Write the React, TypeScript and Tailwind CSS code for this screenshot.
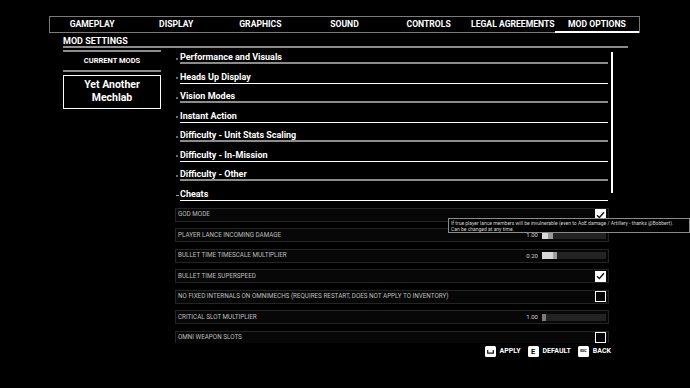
import React from "react";

const tabs = ["GAMEPLAY", "DISPLAY", "GRAPHICS", "SOUND", "CONTROLS", "LEGAL AGREEMENTS", "MOD OPTIONS"];

const sections: { t: string; gray: boolean; open?: boolean }[] = [
  { t: "Performance and Visuals", gray: true },
  { t: "Heads Up Display", gray: false },
  { t: "Vision Modes", gray: true },
  { t: "Instant Action", gray: false },
  { t: "Difficulty - Unit Stats Scaling", gray: true },
  { t: "Difficulty - In-Mission", gray: false },
  { t: "Difficulty - Other", gray: true },
  { t: "Cheats", gray: false, open: true },
];

type Row =
  | { label: string; kind: "check"; checked: boolean }
  | { label: string; kind: "slider"; value: string; fill: number; handle: number; handleColor: string };

const rows: Row[] = [
  { label: "GOD MODE", kind: "check", checked: true },
  { label: "PLAYER LANCE INCOMING DAMAGE", kind: "slider", value: "1.00", fill: 6, handle: 5, handleColor: "#9a9a9a" },
  { label: "BULLET TIME TIMESCALE MULTIPLIER", kind: "slider", value: "0.20", fill: 11, handle: 4, handleColor: "#a0a0a0" },
  { label: "BULLET TIME SUPERSPEED", kind: "check", checked: true },
  { label: "NO FIXED INTERNALS ON OMNIMECHS (REQUIRES RESTART, DOES NOT APPLY TO INVENTORY)", kind: "check", checked: false },
  { label: "CRITICAL SLOT MULTIPLIER", kind: "slider", value: "1.00", fill: 0, handle: 4, handleColor: "#7a7a7a" },
  { label: "OMNI WEAPON SLOTS", kind: "check", checked: false },
];

function Checkbox({ checked }: { checked: boolean }) {
  return (
    <div
      className={
        "w-[11px] h-[11px] border-[1.5px] border-white flex items-center justify-center " +
        (checked ? "bg-white" : "bg-black")
      }
    >
      {checked && (
        <svg width="9" height="8" viewBox="0 0 9 8">
          <path d="M1 4.2 L3.4 6.5 L8 1.2" fill="none" stroke="#111" strokeWidth="1.4" />
        </svg>
      )}
    </div>
  );
}

function Slider({ value, fill, handle, handleColor }: { value: string; fill: number; handle: number; handleColor: string }) {
  return (
    <div className="flex items-center">
      <span className="text-[6px] text-[#cfcfcf] mr-[4px] leading-none">{value}</span>
      <div className="w-[64px] h-[7px] bg-[#232323] flex">
        <div className="h-full bg-[#d8d8d8]" style={{ width: fill }} />
        <div className="h-full" style={{ width: handle, backgroundColor: handleColor }} />
      </div>
    </div>
  );
}

function KeyIcon({ children }: { children: React.ReactNode }) {
  return (
    <div className="w-[11px] h-[11px] bg-white rounded-[1.5px] flex items-center justify-center text-black">
      {children}
    </div>
  );
}

export default function App() {
  return (
    <div className="w-[690px] h-[388px] bg-black relative overflow-hidden font-['Roboto',sans-serif] text-white">
      <div className="pt-[16px]">
        {/* Tabs */}
        <div className="ml-[49px] w-[591px] h-[17px] border-t border-l border-r border-[#7a7a7a] flex">
          {tabs.map((t) => {
            const active = t === "MOD OPTIONS";
            return (
              <div
                key={t}
                className={
                  "flex-1 flex items-center justify-center text-[8.6px] font-bold leading-none " +
                  (active ? "border-b-[2px] border-white" : "border-b border-[#7a7a7a]")
                }
              >
                <span className={active ? "mt-[1px]" : ""}>{t}</span>
              </div>
            );
          })}
        </div>

        {/* Title */}
        <div className="ml-[63px] h-[13px] pt-[3px] text-[9px] font-bold leading-[10px]">MOD SETTINGS</div>
        <div className="ml-[63px] w-[565px] h-[2px] bg-[#8c8c8c]" />

        <div className="flex ml-[63px]">
          {/* Left column */}
          <div className="w-[98px] flex flex-col">
            <div className="mt-[2px] h-[2px] bg-[#8c8c8c]" />
            <div className="h-[18px] flex items-center justify-center text-[7.5px] font-bold leading-none">
              CURRENT MODS
            </div>
            <div className="h-[2px] bg-[#8c8c8c]" />
            <div className="mt-[3px] h-[34px] border-[1.5px] border-white flex items-center justify-center text-center text-[10.5px] font-bold leading-[12.7px]">
              Yet Another
              <br />
              Mechlab
            </div>
          </div>

          {/* Right column */}
          <div className="ml-[14px] flex">
            <div className="w-[434px] h-[295px] overflow-hidden flex flex-col">
              {sections.map((s, i) => (
                <div key={s.t} className={"flex " + (i === 0 ? "pt-[4px]" : "pt-[7.5px]")}>
                  <div className="w-[5px] flex items-center">
                    {s.open ? (
                      <div className="mt-[2px] ml-[1px] w-[3px] h-[1px] bg-[#9a9a9a]" />
                    ) : (
                      <div className="mt-[1px] ml-[1px] w-[2px] h-[2px] bg-[#6a6a6a]" />
                    )}
                  </div>
                  <div className="w-[428px] flex flex-col">
                    <div className="h-[10px] text-[9px] font-bold leading-[10px] whitespace-nowrap">{s.t}</div>
                    <div className="h-[2px] flex flex-col justify-end">
                      <div className={s.gray ? "h-[2px] bg-[#8c8c8c]" : "h-[1px] bg-white"} />
                    </div>
                  </div>
                </div>
              ))}

              <div className="mt-[7px] flex flex-col gap-[6.5px]">
                {rows.map((r) => (
                  <div
                    key={r.label}
                    className="shrink-0 h-[14px] border border-[#242424] bg-[#070707] flex items-center justify-between pl-[2px] pr-[2px]"
                  >
                    <span className="text-[6.3px] text-[#bdbdbd] leading-none whitespace-nowrap">{r.label}</span>
                    {r.kind === "check" ? (
                      <Checkbox checked={r.checked} />
                    ) : (
                      <Slider value={r.value} fill={r.fill} handle={r.handle} handleColor={r.handleColor} />
                    )}
                  </div>
                ))}
              </div>
            </div>
            {/* scrollbar */}
            <div className="ml-[2px] w-[2px]">
              <div className="mt-[4px] h-[141px] bg-white" />
            </div>
          </div>
        </div>

        {/* Bottom buttons */}
        <div className="mt-[3px] flex justify-end pr-[79px] gap-[7px] items-center">
          <div className="flex items-center gap-[4px]">
            <KeyIcon>
              <svg width="7" height="4" viewBox="0 0 7 4">
                <path d="M0.7 0 V3.2 H6.3 V0" fill="none" stroke="#111" strokeWidth="1.2" />
              </svg>
            </KeyIcon>
            <span className="text-[7px] font-bold leading-none">APPLY</span>
          </div>
          <div className="flex items-center gap-[4px]">
            <KeyIcon>
              <span className="text-[7.5px] font-bold leading-none">E</span>
            </KeyIcon>
            <span className="text-[7px] font-bold leading-none">DEFAULT</span>
          </div>
          <div className="flex items-center gap-[4px]">
            <KeyIcon>
              <span className="text-[3.5px] font-bold leading-none">ESC</span>
            </KeyIcon>
            <span className="text-[7px] font-bold leading-none">BACK</span>
          </div>
        </div>
      </div>

      {/* Tooltip */}
      <div className="absolute left-[448px] top-[218px] w-[242px] h-[15px] border border-[#8a8a8a] bg-black px-[2px] pt-[1px] text-[5px] leading-[6.2px] text-[#d4d4d4] whitespace-nowrap">
        If true player lance members will be invulnerable (even to AoE damage / Artillery - thanks @Bobbert).
        <br />
        Can be changed at any time.
      </div>
    </div>
  );
}
